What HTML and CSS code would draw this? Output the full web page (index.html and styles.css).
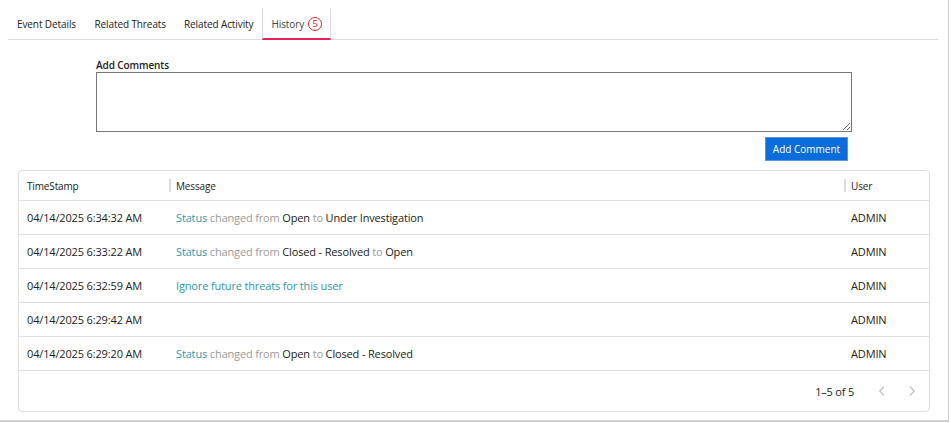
FILE: index.html
```html
<!DOCTYPE html>
<html>
<head>
<meta charset="utf-8">
<link rel="stylesheet" href="styles.css">
</head>
<body>
<div class="frame">
  <div class="tabs">
    <div class="tab">Event Details</div>
    <div class="tab">Related Threats</div>
    <div class="tab">Related Activity</div>
    <div class="tab active">History <span class="badge">5</span></div>
  </div>
  <div class="comments">
    <label class="label">Add Comments</label>
    <textarea class="box"></textarea>
    <div class="actions"><button class="btn">Add Comment</button></div>
  </div>
  <div class="card">
    <div class="row head">
      <div class="c1">TimeStamp</div>
      <div class="c2"><span class="sep"></span>Message</div>
      <div class="c3"><span class="sep"></span>User</div>
    </div>
    <div class="row">
      <div class="c1">04/14/2025 6:34:32 AM</div>
      <div class="c2"><span class="link">Status</span> <span class="muted">changed from</span> Open <span class="muted">to</span> Under Investigation</div>
      <div class="c3">ADMIN</div>
    </div>
    <div class="row">
      <div class="c1">04/14/2025 6:33:22 AM</div>
      <div class="c2"><span class="link">Status</span> <span class="muted">changed from</span> Closed - Resolved <span class="muted">to</span> Open</div>
      <div class="c3">ADMIN</div>
    </div>
    <div class="row">
      <div class="c1">04/14/2025 6:32:59 AM</div>
      <div class="c2"><span class="link">Ignore future threats for this user</span></div>
      <div class="c3">ADMIN</div>
    </div>
    <div class="row">
      <div class="c1">04/14/2025 6:29:42 AM</div>
      <div class="c2"></div>
      <div class="c3">ADMIN</div>
    </div>
    <div class="row">
      <div class="c1">04/14/2025 6:29:20 AM</div>
      <div class="c2"><span class="link">Status</span> <span class="muted">changed from</span> Open <span class="muted">to</span> Closed - Resolved</div>
      <div class="c3">ADMIN</div>
    </div>
    <div class="foot">
      <span class="count">1–5 of 5</span>
      <svg class="arrow" width="8" height="12" viewBox="0 0 8 12"><path d="M6 1.5 L1.8 6 L6 10.5" fill="none" stroke="#c4c4c4" stroke-width="1.3"/></svg>
      <svg class="arrow" width="8" height="12" viewBox="0 0 8 12"><path d="M2 1.5 L6.2 6 L2 10.5" fill="none" stroke="#c4c4c4" stroke-width="1.3"/></svg>
    </div>
  </div>
</div>
</body>
</html>
```
FILE: styles.css
```css
html, body { margin: 0; padding: 0; background: #fff; }
body { font-family: "Open Sans", "Noto Sans", sans-serif; font-size: 11px; color: #222; }
.frame {
  width: 948px;
  height: 420px;
  border-right: 1px solid #cfcfcf;
  border-bottom: 2px solid #cfcfcf;
  box-sizing: content-box;
  overflow: hidden;
}
.tabs {
  display: flex;
  margin: 8px 10px 0 8px;
  border-bottom: 1px solid #dcdcdc;
  height: 31px;
}
.tab {
  display: flex;
  align-items: center;
  padding: 0 9px;
  height: 31px;
  box-sizing: border-box;
  color: #222;
  font-size: 10px;
  letter-spacing: -0.1px;
}
.tab:first-child { padding-left: 9px; padding-right: 9.5px; }
.tab.active {
  border-left: 1px solid #dcdcdc;
  border-right: 1px solid #dcdcdc;
  border-bottom: 2px solid #e8215a;
  padding: 2px 8px 0 8px;
  margin-bottom: -1px;
  height: 32px;
  color: #444;
}
.badge {
  display: inline-flex;
  align-items: center;
  justify-content: center;
  width: 12px;
  height: 12px;
  border: 1.4px solid #e0262f;
  border-radius: 50%;
  color: #e0262f;
  font-size: 9.5px;
  margin-left: 4px;
  line-height: 1;
}
.comments {
  margin: 18px 99px 0 96px;
  display: flex;
  flex-direction: column;
}
.label {
  font-weight: 600;
  font-size: 10px;
  color: #222;
  height: 14px;
  line-height: 14px;
  letter-spacing: -0.1px;
}
.box {
  display: block;
  width: 756px;
  height: 60px;
  box-sizing: border-box;
  border: 1px solid #777;
  border-radius: 0;
  margin: 0;
  resize: vertical;
}
.actions {
  display: flex;
  justify-content: flex-end;
  margin-top: 5px;
  padding-right: 1px;
}
.btn {
  background: #0a6ddb;
  color: #fff;
  border: 1px solid #5b95d8;
  font-family: "Open Sans", sans-serif;
  font-size: 10px;
  height: 24px;
  width: 83px;
  padding: 0;
}
.card {
  margin: 9px 0 0 18px;
  width: 912px;
  border: 1px solid #dedede;
  border-radius: 4px;
  box-sizing: border-box;
}
.row {
  display: flex;
  align-items: center;
  height: 34px;
  border-bottom: 1px solid #e0e0e0;
  box-sizing: border-box;
  letter-spacing: -0.15px;
}
.row.head { height: 30px; font-size: 10px; }
.c1 { width: 150px; padding-left: 8px; box-sizing: border-box; }
.c2 { flex: 1; padding-left: 7px; }
.c3 { width: 85px; padding-left: 7px; box-sizing: border-box; }
.head .c2, .head .c3 { padding-left: 0; display: flex; align-items: center; }
.sep {
  display: inline-block;
  width: 2px;
  height: 13px;
  background: #dcdcdc;
  margin-right: 5px;
}
.link { color: #3098ab; }
.muted { color: #9a9a9a; }
.foot {
  display: flex;
  align-items: center;
  justify-content: flex-end;
  height: 40px;
  padding-right: 13px;
}
.count { margin-right: 24px; letter-spacing: -0.2px; }
.arrow { margin-left: 22px; }
.arrow:first-of-type { margin-left: 0; }
```
